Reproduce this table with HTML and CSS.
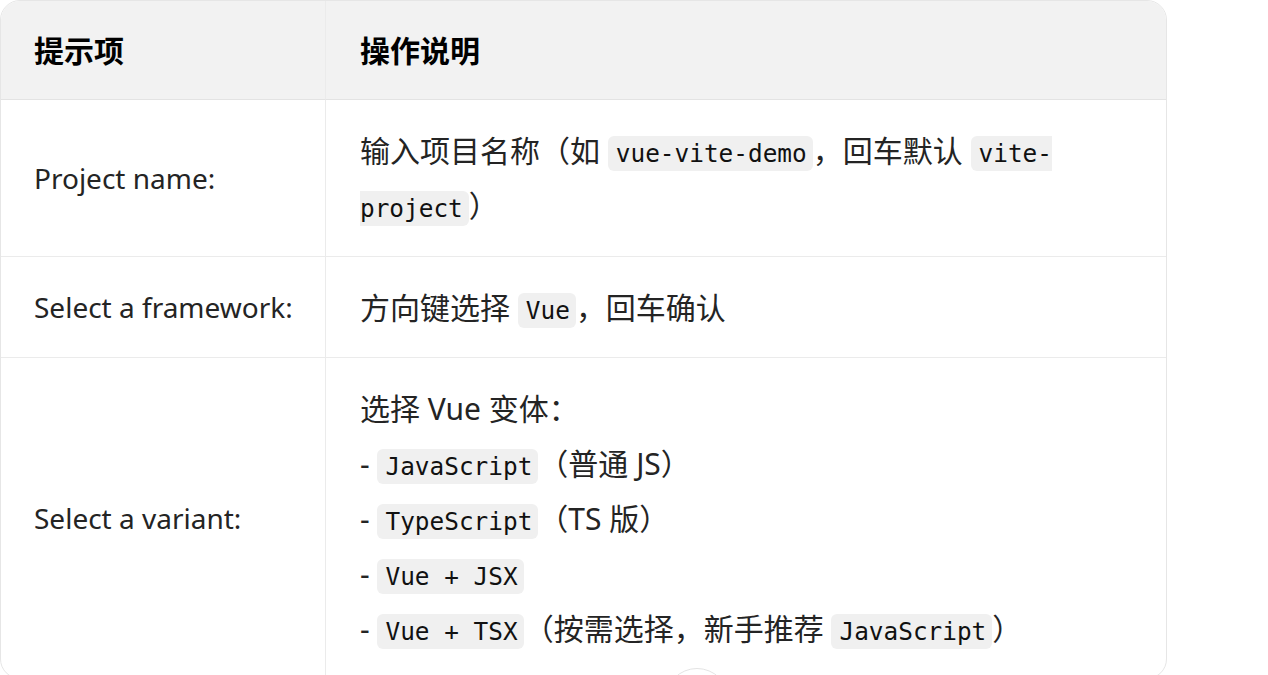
FILE: index.html
```html
<!DOCTYPE html>
<html lang="zh-CN">
<head>
<meta charset="utf-8">
<title>Vite 提示项</title>
<link rel="stylesheet" href="styles.css">
</head>
<body>
<div class="table-wrap">
  <table class="prompt-table">
    <thead>
      <tr>
        <th class="col-key">提示项</th>
        <th class="col-desc">操作说明</th>
      </tr>
    </thead>
    <tbody>
      <tr class="row-first">
        <td class="col-key">Project name:</td>
        <td class="col-desc">输入项目名称（如 <code>vue-vite-demo</code>，回车默认 <code>vite-<br>project</code>）</td>
      </tr>
      <tr>
        <td class="col-key">Select a framework:</td>
        <td class="col-desc">方向键选择 <code>Vue</code>，回车确认</td>
      </tr>
      <tr>
        <td class="col-key">Select a variant:</td>
        <td class="col-desc">选择 Vue 变体：<br>- <code>JavaScript</code>（普通 JS）<br>- <code>TypeScript</code>（TS 版）<br>- <code>Vue + JSX</code><br>- <code>Vue + TSX</code>（按需选择，新手推荐 <code>JavaScript</code>）</td>
      </tr>
    </tbody>
  </table>
</div>
<button class="scroll-btn" aria-label="滚动到底部"></button>
</body>
</html>
```

FILE: styles.css
```css
html, body {
  margin: 0;
  padding: 0;
  background: #ffffff;
}

body {
  font-family: "Noto Sans", "Noto Sans CJK SC", sans-serif;
  font-size: 30px;
  color: #242424;
  overflow: hidden;
}

.table-wrap {
  width: 1167px;
  box-sizing: border-box;
  border: 1px solid #e6e6e6;
  border-radius: 20px;
  overflow: hidden;
}

.prompt-table {
  width: 100%;
  table-layout: fixed;
  border-collapse: separate;
  border-spacing: 0;
}

.prompt-table th,
.prompt-table td {
  text-align: left;
  vertical-align: middle;
  line-height: 55px;
  padding: 23px 20px 22px 34px;
}

.prompt-table th {
  background: #f2f2f2;
  font-family: "Noto Sans CJK SC", sans-serif;
  font-size: 30px;
  font-weight: 700;
  color: #000;
  padding-top: 21px;
  padding-bottom: 22px;
  border-bottom: 1px solid #e3e3e3;
}

.prompt-table .row-first td {
  padding-bottom: 23px;
}

.prompt-table tbody tr + tr td {
  border-top: 1px solid #ebebeb;
}

.prompt-table .col-key {
  width: 325px;
  box-sizing: border-box;
  padding-left: 33px;
  border-right: 1px solid #ebebeb;
}

.prompt-table td.col-key {
  font-size: 28px;
}

code {
  font-family: "DejaVu Sans Mono", monospace;
  font-size: 24.4px;
  line-height: 1;
  color: #111;
  background: #f0f0f0;
  border-radius: 6px;
  padding: 3px 6px 3px 8px;
  -webkit-box-decoration-break: slice;
  box-decoration-break: slice;
}

.scroll-btn {
  position: fixed;
  left: 665px;
  top: 668px;
  width: 64px;
  height: 64px;
  border-radius: 50%;
  background: #fff;
  border: 1px solid #e3e3e3;
  padding: 0;
}
```
